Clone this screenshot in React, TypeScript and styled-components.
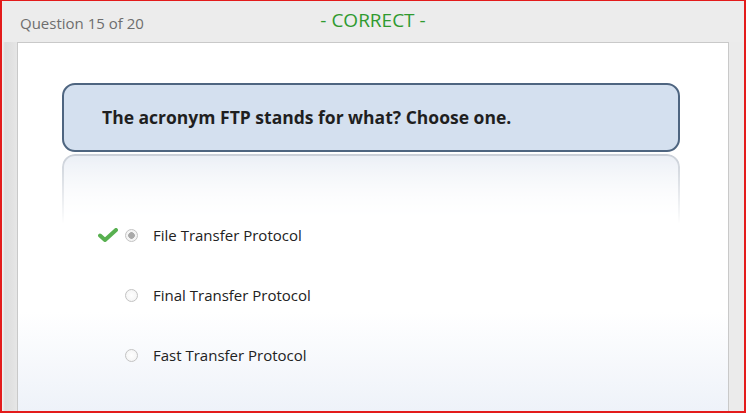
import React from 'react'
import styled, { createGlobalStyle } from 'styled-components'

const GlobalStyle = createGlobalStyle`
  html, body {
    margin: 0;
    padding: 0;
    overflow: hidden;
    background: #ebebeb;
  }
`

const Frame = styled.div`
  width: 746px;
  height: 413px;
  box-sizing: border-box;
  border: 2px solid #e31b1b;
  border-top-width: 1px;
  background: linear-gradient(90deg, #f3f3f3 0, #dcdcdc 3px, #e6e6e6 15px, #ebebeb 16px);
  display: flex;
  flex-direction: column;
  font-family: "Open Sans", "Noto Sans", sans-serif;
  overflow: hidden;
`

const Header = styled.div`
  height: 41px;
  display: grid;
  grid-template-columns: 1fr auto 1fr;
  align-items: center;
  padding-left: 17px;
  padding-right: 18px;
  background: #ececec;
  margin-left: 1px;
`

const Counter = styled.div`
  font-size: 15px;
  color: #6e6e6e;
  margin-top: 2px;
`

const Verdict = styled.div`
  font-size: 19px;
  color: #2f9a2f;
  margin-top: -3px;
`

const Panel = styled.div`
  flex: 1;
  margin: 0 15px 0 15px;
  border: 1px solid #c9c9c9;
  border-bottom: none;
  background: linear-gradient(180deg, #ffffff 0, #ffffff 73%, #eef2f9 100%);
  padding: 40px 48px 0 44px;
  display: flex;
  flex-direction: column;
`

const QuestionBox = styled.div`
  height: 69px;
  box-sizing: border-box;
  border: 2px solid #4e6580;
  border-radius: 13px;
  background: #d4e0ef;
  display: flex;
  align-items: center;
  padding-left: 38px;
  font-size: 17.5px;
  font-weight: 700;
  color: #1f1f1f;
  padding-bottom: 1px;
`

const Reflection = styled.div`
  height: 70px;
  margin-top: 2px;
  box-sizing: border-box;
  border: 2px solid #c0c7d1;
  border-bottom: none;
  border-radius: 13px 13px 0 0;
  background: linear-gradient(180deg, #e7ecf4 0, #ffffff 100%);
  -webkit-mask-image: linear-gradient(180deg, rgba(0,0,0,0.85) 0, rgba(0,0,0,0.1) 90%, rgba(0,0,0,0) 100%);
  mask-image: linear-gradient(180deg, rgba(0,0,0,0.85) 0, rgba(0,0,0,0.1) 90%, rgba(0,0,0,0) 100%);
`

const Options = styled.div`
  display: flex;
  flex-direction: column;
  gap: 40px;
  margin-top: 1px;
  padding-left: 36px;
`

const Option = styled.div`
  display: flex;
  align-items: center;
  height: 20px;
`

const Mark = styled.div`
  width: 20px;
  height: 14px;
  margin-right: 7px;
  display: flex;
  align-items: center;
`

const Radio = styled.span<{ $selected?: boolean }>`
  width: 11px;
  height: 11px;
  border-radius: 50%;
  border: 1px solid #c3c3c3;
  background: ${p => p.$selected
    ? 'radial-gradient(circle, #a9a9a9 0, #a9a9a9 3px, #f4f4f4 3.6px)'
    : 'radial-gradient(circle, #ffffff 0, #f1f1f1 100%)'};
  margin-right: 15px;
  flex-shrink: 0;
`

const Label = styled.span`
  font-size: 15px;
  color: #222;
`

const Check = () => (
  <svg width="20" height="14" viewBox="0 0 20 14">
    <path d="M2 7.5 L7 12 L18 2" fill="none" stroke="#58b050" strokeWidth="4" strokeLinejoin="round" strokeLinecap="round" />
  </svg>
)

const answers = [
  { text: 'File Transfer Protocol', selected: true, correct: true },
  { text: 'Final Transfer Protocol' },
  { text: 'Fast Transfer Protocol' },
]

export default function App() {
  return (
    <>
      <GlobalStyle />
      <Frame>
        <Header>
          <Counter>Question 15 of 20</Counter>
          <Verdict>- CORRECT -</Verdict>
          <div />
        </Header>
        <Panel>
          <QuestionBox>The acronym FTP stands for what? Choose one.</QuestionBox>
          <Reflection />
          <Options>
            {answers.map((a, i) => (
              <Option key={i}>
                <Mark>{a.correct && <Check />}</Mark>
                <Radio $selected={a.selected} />
                <Label>{a.text}</Label>
              </Option>
            ))}
          </Options>
        </Panel>
      </Frame>
    </>
  )
}
